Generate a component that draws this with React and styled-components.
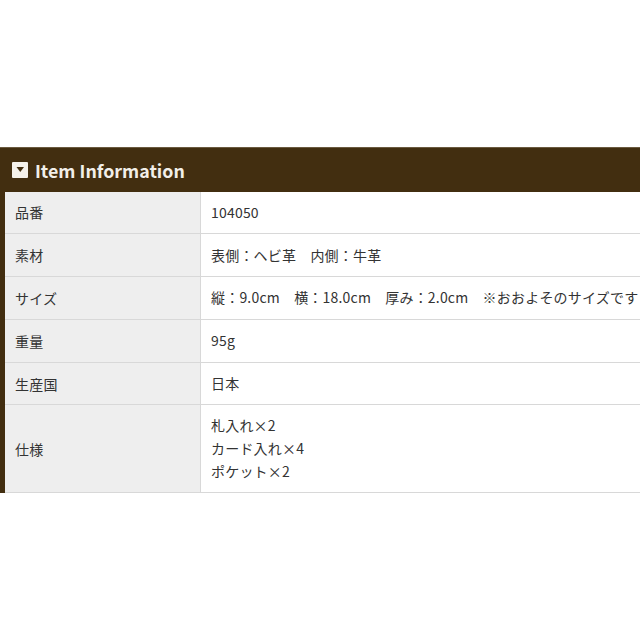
import React from 'react';
import styled, { createGlobalStyle } from 'styled-components';

const GlobalStyle = createGlobalStyle`
  html, body {
    margin: 0;
    padding: 0;
    background: #ffffff;
  }
  body {
    font-family: "Noto Sans CJK JP", "Noto Sans", sans-serif;
    color: #333333;
  }
`;

const Page = styled.div`
  width: 640px;
  height: 640px;
  overflow: hidden;
  padding-top: 147px;
  box-sizing: border-box;
`;

const Panel = styled.section`
  width: 640px;
  background: #422e10;
  padding-left: 5px;
  box-sizing: border-box;
`;

const Heading = styled.h2`
  height: 44.5px;
  margin: 0 0 0 -5px;
  padding-left: 12px;
  display: flex;
  align-items: center;
  gap: 7px;
  font-size: 17.8px;
  font-weight: 700;
  color: #f2efe9;
  border-top: 1px solid #6b5a3f;
  box-sizing: border-box;
`;

const HeadingIcon = styled.svg`
  width: 16px;
  height: 16px;
  flex: none;
`;

const Table = styled.div`
  width: 700px;
  background: #ffffff;
`;

const Row = styled.div`
  display: grid;
  grid-template-columns: 196px 1fr;
  height: ${({ $tall }) => ($tall ? '88px' : '42.8px')};
  border-bottom: 1px solid #d8d8d8;
  box-sizing: border-box;
`;

const Label = styled.div`
  display: flex;
  align-items: center;
  padding-left: 10px;
  background: #eeeeee;
  border-right: 1px solid #d8d8d8;
  font-size: 14px;
  letter-spacing: 0.2px;
  white-space: nowrap;
`;

const Value = styled.div`
  display: flex;
  flex-direction: column;
  justify-content: center;
  padding-left: 10px;
  font-size: 14px;
  letter-spacing: 0.2px;
  line-height: 23px;
  white-space: pre;
`;

const ROWS = [
  { label: '品番', lines: ['104050'] },
  { label: '素材', lines: ['表側：ヘビ革　内側：牛革'] },
  { label: 'サイズ', lines: ['縦：9.0cm　横：18.0cm　厚み：2.0cm　※おおよそのサイズです'] },
  { label: '重量', lines: ['95g'] },
  { label: '生産国', lines: ['日本'] },
  { label: '仕様', lines: ['札入れ×2', 'カード入れ×4', 'ポケット×2'], tall: true },
];

const App = () => {
  return (
    <Page>
      <GlobalStyle />
      <Panel>
        <Heading>
          <HeadingIcon viewBox="0 0 16 16">
            <rect width="16" height="16" rx="1" fill="#f4f1ea" />
            <path d="M4.5 5h7.5l-3.75 5z" fill="#422e10" />
          </HeadingIcon>
          Item Information
        </Heading>
        <Table>
          {ROWS.map(row => (
            <Row key={row.label} $tall={row.tall}>
              <Label>{row.label}</Label>
              <Value>
                {row.lines.map(line => (
                  <span key={line}>{line}</span>
                ))}
              </Value>
            </Row>
          ))}
        </Table>
      </Panel>
    </Page>
  );
};

export default App;
